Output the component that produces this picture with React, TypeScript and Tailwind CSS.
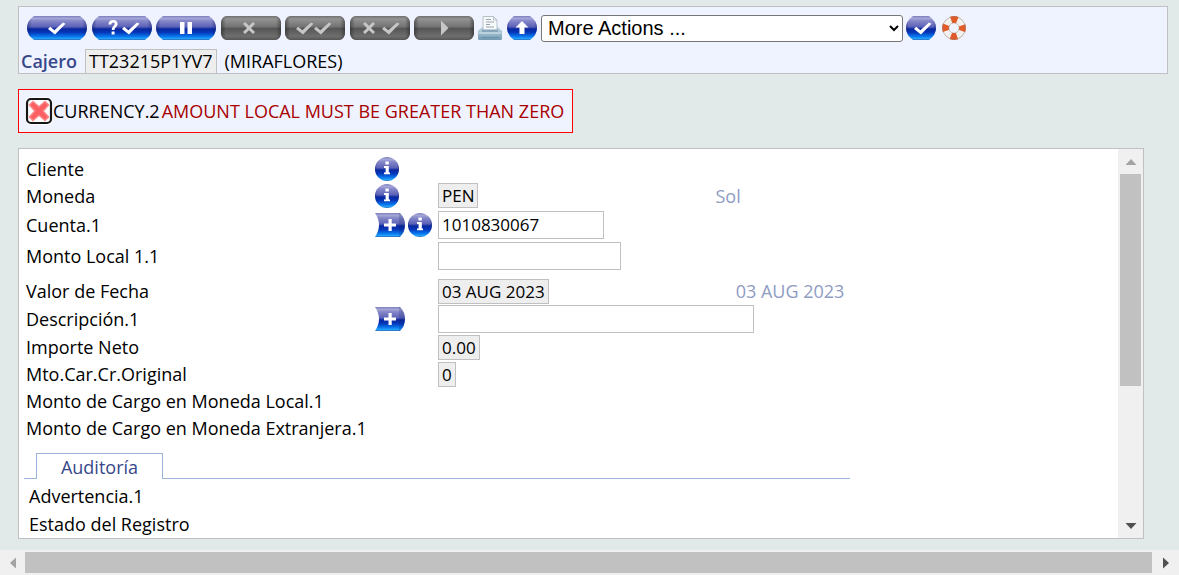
import React from "react";

const blueStops = (
  <>
    <stop offset="0" stopColor="#7c7fbc" />
    <stop offset="0.1" stopColor="#a5a6d8" />
    <stop offset="0.2" stopColor="#8688c8" />
    <stop offset="0.45" stopColor="#5c62b8" />
    <stop offset="0.54" stopColor="#0a28a0" />
    <stop offset="0.68" stopColor="#0536b8" />
    <stop offset="0.85" stopColor="#0876ec" />
    <stop offset="0.94" stopColor="#22a0fa" />
    <stop offset="1" stopColor="#2b6cb4" />
  </>
);

const grayStops = (
  <>
    <stop offset="0" stopColor="#707070" />
    <stop offset="0.12" stopColor="#939393" />
    <stop offset="0.45" stopColor="#737373" />
    <stop offset="0.52" stopColor="#565656" />
    <stop offset="0.85" stopColor="#6e6e6e" />
    <stop offset="1" stopColor="#555" />
  </>
);

function Defs() {
  return (
    <svg className="absolute size-0" aria-hidden="true">
      <defs>
        <linearGradient id="blue" x1="0" y1="0" x2="0" y2="1">{blueStops}</linearGradient>
        <linearGradient id="gray" x1="0" y1="0" x2="0" y2="1">{grayStops}</linearGradient>
        <linearGradient id="edge" x1="0" y1="0" x2="1" y2="0">
          <stop offset="0" stopColor="#101c6c" stopOpacity="0.45" />
          <stop offset="0.08" stopColor="#101c6c" stopOpacity="0" />
          <stop offset="0.92" stopColor="#101c6c" stopOpacity="0" />
          <stop offset="1" stopColor="#101c6c" stopOpacity="0.45" />
        </linearGradient>
        <linearGradient id="grayEdge" x1="0" y1="0" x2="1" y2="0">
          <stop offset="0" stopColor="#222" stopOpacity="0.5" />
          <stop offset="0.08" stopColor="#222" stopOpacity="0" />
          <stop offset="0.92" stopColor="#222" stopOpacity="0" />
          <stop offset="1" stopColor="#222" stopOpacity="0.5" />
        </linearGradient>
        <linearGradient id="printer" x1="0" y1="0" x2="0" y2="1">
          <stop offset="0" stopColor="#c3d8e2" />
          <stop offset="0.5" stopColor="#9dbccd" />
          <stop offset="1" stopColor="#7298b0" />
        </linearGradient>
      </defs>
    </svg>
  );
}

const check = (x: number) => `M${x - 1} 13l2.200-2.200 4.200 3.400 8.600-7.700 2.500 1.300-10.500 10.700z`;
const cross = (x: number) => `M${x} 8l2-2 4 3.800 4-3.800 2 2-4 4 4 4-2 2-4-3.800-4 3.800-2-2 4-4z`;

function Pill({ label, gray, children }: { label: string; gray?: boolean; children: React.ReactNode }) {
  const shape = gray
    ? "M5 0H55Q59 1 60 6V18Q59 23 55 24H5Q1 23 0 18V6Q1 1 5 0Z"
    : "M7 0H53Q60 5 60 12Q60 19 53 24H7Q0 19 0 12Q0 5 7 0Z";
  return (
    <button type="button" aria-label={label} disabled={gray} className="h-6 w-15">
      <svg viewBox="0 0 60 24" className="block h-6 w-15">
        <path d={shape} fill={gray ? "url(#gray)" : "url(#blue)"} />
        <path d={shape} fill={gray ? "url(#grayEdge)" : "url(#edge)"} />
        <g fill={gray ? "#c6c6c6" : "#fff"}>{children}</g>
      </svg>
    </button>
  );
}

function SmallPill({ label, d }: { label: string; d: string }) {
  const shape = "M7 0H23Q30 5 30 12Q30 19 23 24H7Q0 19 0 12Q0 5 7 0Z";
  return (
    <button type="button" aria-label={label} className="h-6 w-[30px] shrink-0">
      <svg viewBox="0 0 30 24" className="block h-6 w-[30px]">
        <path d={shape} fill="url(#blue)" />
        <path d={shape} fill="url(#edge)" />
        <path d={d} fill="#fff" />
      </svg>
    </button>
  );
}

function InfoButton() {
  return (
    <button type="button" aria-label="Información" className="size-6">
      <svg viewBox="0 0 24 24" className="block size-6">
        <circle cx="12" cy="12" r="12" fill="url(#blue)" />
        <circle cx="12" cy="12" r="12" fill="url(#edge)" />
        <path d="M10.400 4.600h3.400v2.800h-3.400zM9 9h4.800v6.400H15v1.900H9v-1.900h1.600v-4.500H9z" fill="#fff" />
      </svg>
    </button>
  );
}

function ExpandButton() {
  return (
    <button type="button" aria-label="Añadir valor" className="h-6 w-[30px]">
      <svg viewBox="0 0 30 24" className="block h-6 w-[30px]">
        <path d="M0 0H25Q30 5 30 12Q30 19 25 24H0Q4 18 4 12Q4 6 0 0Z" fill="url(#blue)" />
        <path d="M25 0Q30 5 30 12Q30 19 25 24H24V0z" fill="#101c6c" fillOpacity="0.2" />
        <path d="M13.500 6h3.200v4.500H21v3.100h-4.300V18h-3.200v-4.400H9v-3.100h4.500z" fill="#fff" />
      </svg>
    </button>
  );
}

function PrintButton() {
  return (
    <button type="button" aria-label="Imprimir" className="size-6">
      <svg viewBox="0 0 24 24" className="block size-6">
        <path d="M4 11h16l4 4v7.500q0 1.500-1.500 1.500h-21Q0 24 0 22.500V15z" fill="url(#printer)" />
        <path d="M5 .5h10.500l3.500 3.500v11H5z" fill="#f7f9fb" stroke="#b4c2cc" />
        <path d="M15.500.5V4H19" fill="none" stroke="#b4c2cc" />
        <path d="M8 3.500h5M8 6h8M8 8.500h4M8 11h8" stroke="#9aa5b0" />
        <path d="M4 13.500h16V16H4z" fill="#86a5b8" />
        <path d="M1 17h22" stroke="#d3e5ee" />
        <path d="M3 21.500h18" stroke="#6890a8" />
      </svg>
    </button>
  );
}

function HelpButton() {
  return (
    <button type="button" aria-label="Ayuda" className="size-6">
      <svg viewBox="0 0 24 24" className="block size-6" fill="none">
        <circle cx="12" cy="12" r="8.500" stroke="#f3f1ee" strokeWidth="7" />
        <circle cx="12" cy="12" r="8.500" stroke="#e25a28" strokeWidth="6.800" strokeDasharray="6.200 7.152" strokeDashoffset="3.100" />
        <circle cx="12" cy="12" r="11.400" stroke="#8d7b70" strokeOpacity="0.5" />
        <circle cx="12" cy="12" r="5.200" stroke="#8d7b70" strokeOpacity="0.4" />
      </svg>
    </button>
  );
}

function ErrorIcon() {
  return (
    <svg viewBox="0 0 28 28" className="block size-7 shrink-0" aria-hidden="true">
      <rect width="28" height="28" rx="6" fill="#fff" />
      <rect x="2" y="2" width="24" height="24" rx="4" fill="#fff" stroke="#161616" strokeWidth="2.200" />
      <path d="M4.500 8L8 4.500l6 5.300 6-5.300L23.500 8l-5.300 6 5.300 6-3.500 3.500-6-5.300-6 5.300L4.500 20l5.300-6z" fill="#fb5f62" stroke="#fb8888" strokeWidth="1.500" />
    </svg>
  );
}

function Value({ large, children }: { large?: boolean; children: React.ReactNode }) {
  return (
    <output
      className={`block h-[25px] border border-[#c0c0c0] bg-[#eee] px-[3px] leading-[23px] whitespace-nowrap ${large ? "text-[18px]" : "text-[17px]"}`}
    >
      {children}
    </output>
  );
}

const input = "block h-7 border border-[#c0c0c0] bg-white px-[3px] text-[17px] leading-6";

function Row({
  label,
  htmlFor,
  height,
  icons,
  children,
}: {
  label: string;
  htmlFor?: string;
  height: string;
  icons?: React.ReactNode;
  children?: React.ReactNode;
}) {
  return (
    <div className={`flex items-center ${height}`}>
      <div className="w-[349px] shrink-0 whitespace-nowrap">
        {htmlFor ? <label htmlFor={htmlFor}>{label}</label> : label}
      </div>
      <div className="flex w-[63px] shrink-0 gap-[3px]">{icons}</div>
      {children}
    </div>
  );
}

function Arrow({ d, label, className, fill }: { d: string; label: string; className: string; fill: string }) {
  return (
    <button type="button" aria-label={label} className={`flex shrink-0 items-center justify-center ${className}`}>
      <svg viewBox="0 0 12 12" className="size-3">
        <path d={d} fill={fill} />
      </svg>
    </button>
  );
}

export default function App() {
  return (
    <div className="flex h-screen flex-col bg-[#e1eae8] font-['Open_Sans','Noto_Sans',sans-serif] text-[18px] leading-6 text-black">
      <Defs />
      <header className="mt-1.5 mr-[11px] ml-[18px] h-17 shrink-0 border border-[#c0c0c0] bg-[#eff3ff]">
        <div className="flex h-[42px] items-center pl-2">
          <div className="flex w-[447px] shrink-0 justify-between">
            <Pill label="Validar"><path d={check(22)} /></Pill>
            <Pill label="Consultar y validar">
              <path d="M16.500 8.500Q16.500 4 21 4T25.600 8Q25.600 10 23.800 11.300Q22.500 12.300 22.500 14H19.700Q19.700 11.300 21.400 10Q22.700 9 22.700 7.800Q22.700 6.400 21.100 6.400T19.300 8.500zM19.600 15.500h3v3h-3z" />
              <path d={check(31)} />
            </Pill>
            <Pill label="Retener"><path d="M24 6h4.500v12H24zM31.500 6H36v12h-4.500z" /></Pill>
            <Pill label="Eliminar" gray><path d={cross(22)} /></Pill>
            <Pill label="Autorizar" gray><path d={check(12)} /><path d={check(30)} /></Pill>
            <Pill label="Revertir" gray><path d={cross(13)} /><path d={check(33)} /></Pill>
            <Pill label="Siguiente" gray><path d="M27 4.500l7.500 7.500-7.500 7.500z" /></Pill>
          </div>
          <div className="ml-1 flex shrink-0 gap-[5px]">
            <PrintButton />
            <SmallPill label="Subir" d="M15 5l6.500 6.500H17.500V18h-5v-6.500H8.500z" />
          </div>
          <select
            aria-label="More Actions"
            className="ml-1 h-[27px] w-[362px] rounded-[3px] border border-[#767676] bg-white pl-0.5 font-['Liberation_Sans',Arial,sans-serif] text-[20px] leading-6"
          >
            <option>More Actions ...</option>
          </select>
          <div className="ml-[3px] flex shrink-0 gap-1.5">
            <SmallPill label="Ejecutar" d={check(9)} />
            <HelpButton />
          </div>
        </div>
        <div className="flex h-6 items-center pl-0.5">
          <span className="w-16 font-semibold text-[#36488a]">Cajero</span>
          <Value large>TT23215P1YV7</Value>
          <span className="ml-2">(MIRAFLORES)</span>
        </div>
      </header>

      <div role="alert" className="mt-[15px] ml-[18px] flex h-11 shrink-0 items-center self-start border border-[#f00] bg-[#eff3ff] pr-2 pl-1.5 whitespace-nowrap">
        <ErrorIcon />
        <span>CURRENCY.2</span>
        <a href="#amount" className="ml-0.5 text-[#a80000]">AMOUNT LOCAL MUST BE GREATER THAN ZERO</a>
      </div>

      <main className="mt-[15px] mr-[35px] mb-[11px] ml-[18px] flex min-h-0 flex-1 border border-[#c0c0c0] bg-white">
        <div className="min-w-0 flex-1 overflow-hidden pt-1.5">
          <div className="pl-[7px]">
            <Row label="Cliente" height="h-[27px]" icons={<InfoButton />} />
            <Row label="Moneda" height="h-[27px]" icons={<InfoButton />}>
              <Value>PEN</Value>
              <span className="ml-[237px] text-[#8f9cc3]">Sol</span>
            </Row>
            <Row label="Cuenta.1" htmlFor="account" height="h-[31px]" icons={<><ExpandButton /><InfoButton /></>}>
              <input id="account" defaultValue="1010830067" className={`${input} w-[166px]`} />
            </Row>
            <Row label="Monto Local 1.1" htmlFor="amount" height="h-[31px]">
              <input id="amount" className={`${input} w-[183px]`} />
            </Row>
            <div className="pt-1.5">
              <Row label="Valor de Fecha" height="h-7">
                <Value>03 AUG 2023</Value>
                <span className="ml-[187px] text-[#8f9cc3]">03 AUG 2023</span>
              </Row>
              <Row label="Descripción.1" htmlFor="description" height="h-7" icons={<ExpandButton />}>
                <input id="description" className={`${input} w-[316px]`} />
              </Row>
              <Row label="Importe Neto" height="h-7"><Value>0.00</Value></Row>
              <Row label="Mto.Car.Cr.Original" height="h-[26px]"><Value>0</Value></Row>
              <Row label="Monto de Cargo en Moneda Local.1" height="h-[28px]" />
              <Row label="Monto de Cargo en Moneda Extranjera.1" height="h-[26px]" />
            </div>
          </div>
          <div className="mt-3 ml-[5px] flex w-[826px]">
            <div className="w-3 border-b border-[#9cb3d9]" />
            <button type="button" className="h-[26px] w-[127px] border border-b-0 border-[#9cb3d9] text-[#36488a]">Auditoría</button>
            <div className="flex-1 border-b border-[#9cb3d9]" />
          </div>
          <div className="pt-[5px] pl-2.5">
            <div className="h-7">Advertencia.1</div>
            <div className="h-7">Estado del Registro</div>
          </div>
        </div>
        <div className="flex w-[25px] shrink-0 flex-col bg-[#f0f0f0]">
          <Arrow label="Desplazar arriba" className="h-[25px]" fill="#a3a3a3" d="M0.500 9L6 3l5.500 6z" />
          <div className="mx-0.5 h-[212px] bg-[#c1c1c1]" />
          <Arrow label="Desplazar abajo" className="mt-auto h-[25px]" fill="#505050" d="M0.500 3L6 9l5.500-6z" />
        </div>
      </main>

      <div className="flex h-[25px] shrink-0 bg-[#f0f0f0]">
        <Arrow label="Desplazar a la izquierda" className="w-[25px]" fill="#a3a3a3" d="M9 0.500L3 6l6 5.500z" />
        <div className="my-0.5 flex-1 bg-[#c1c1c1]" />
        <Arrow label="Desplazar a la derecha" className="w-[27px]" fill="#505050" d="M3 0.500L9 6l-6 5.500z" />
      </div>
    </div>
  );
}
